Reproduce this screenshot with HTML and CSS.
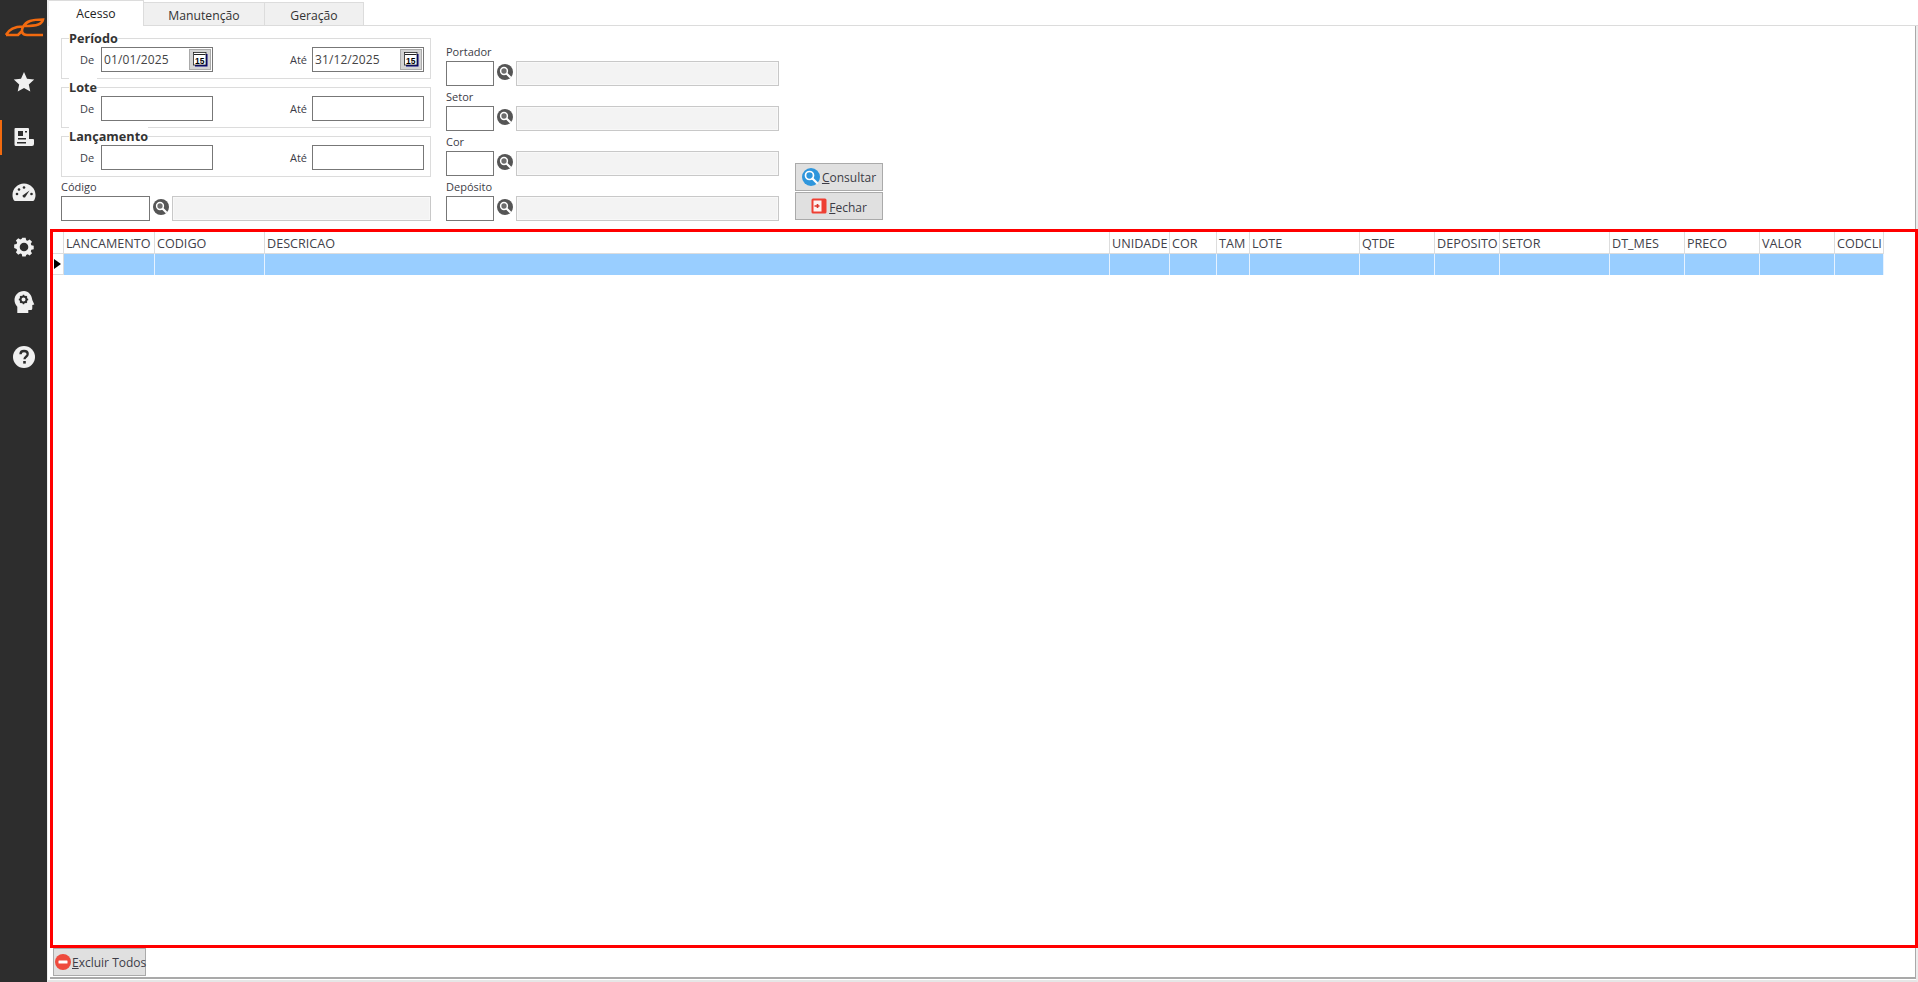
FILE: index.html
```html
<!DOCTYPE html>
<html lang="pt-BR">
<head>
<meta charset="utf-8">
<title>Acesso</title>
<link rel="stylesheet" href="styles.css">
</head>
<body>
<svg class="defs" width="0" height="0">
  <symbol id="lens" viewBox="0 0 16 16">
    <circle cx="8" cy="8" r="8" fill="#555"/>
    <path d="M9.500 9.500L13 13" stroke="#fff" stroke-width="2.200" stroke-linecap="round"/>
    <circle cx="7" cy="7" r="3.400" fill="#6e6e6e" stroke="#fff" stroke-width="1.500"/>
  </symbol>
</svg>
<div class="app">
  <nav class="sidebar">
    <div class="logo">
      <svg width="40" height="20" viewBox="5 17 40 20"><path d="M6 35C9 29 14 26.500 23 26.500M6 35H18L22 31M43 35H27C22 35 21 31 23 27C26 21 32 19.500 43 19.500C42 24 38 26 24 26" fill="none" stroke="#f26a0f" stroke-width="2.600"/></svg>
    </div>
    <a class="nav-item"><svg width="22" height="22" viewBox="0 0 22 22"><path d="M11 1l3 6.700 7.200.8-5.400 4.900 1.500 7.200-6.300-3.700-6.300 3.700 1.500-7.200L.800 8.500 8 7.700z" fill="#f0f0f0"/></svg></a>
    <a class="nav-item active"><svg width="20" height="20" viewBox="0 0 20 20"><path d="M1.500 1h12.500a1 1 0 0 1 1 1v10H19a1 1 0 0 1 1 1v4a2 2 0 0 1-2 2H2a1.500 1.500 0 0 1-1.500-1.500V2a1 1 0 0 1 1-1z" fill="#f0f0f0"/><path d="M4 4h5v5H4zM4 11h8v1.500H4zM11 4h2v1.500h-2z" fill="#2d2d2d"/><path d="M3 15h9v1.500H3z" fill="#2d2d2d"/></svg></a>
    <a class="nav-item"><svg width="24" height="20" viewBox="0 0 24 20"><path d="M12 1.500C5.600 1.500.500 6.700.500 13c0 2 .5 3.800 1.300 5.200l1 .8h18.400l1-.8c.8-1.400 1.300-3.200 1.300-5.200C23.500 6.700 18.400 1.500 12 1.500z" fill="#f0f0f0"/><path d="M10.500 13.500l7-5-4.500 7a2 2 0 0 1-2.500-2z" fill="#2d2d2d"/><circle cx="5" cy="12" r="1.300" fill="#2d2d2d"/><circle cx="7" cy="7.500" r="1.300" fill="#2d2d2d"/><circle cx="12" cy="5.500" r="1.300" fill="#2d2d2d"/><circle cx="19.500" cy="12" r="1.300" fill="#2d2d2d"/></svg></a>
    <a class="nav-item"><svg width="22" height="22" viewBox="0 0 22 22"><path d="M9 1h4l.6 2.800 1.700.7 2.400-1.500 2.800 2.800-1.500 2.400.7 1.700 2.800.6v4l-2.800.6-.7 1.700 1.500 2.400-2.800 2.800-2.400-1.500-1.700.7L13 23H9l-.6-2.800-1.700-.7-2.400 1.500-2.800-2.800 1.500-2.400-.7-1.700L-.500 13V9l2.800-.6.700-1.700L1.500 4.300 4.300 1.500l2.400 1.500 1.700-.7z" transform="translate(1.600 .9) scale(.85)" fill="#f0f0f0"/><circle cx="11" cy="11" r="4.300" fill="#2d2d2d"/></svg></a>
    <a class="nav-item"><svg width="22" height="24" viewBox="0 0 22 24"><path d="M11 1C5.500 1 1.500 5 1.500 10c0 3 1.200 5 2.800 6.700V23h11v-3h2.500a1.500 1.500 0 0 0 1.500-1.500V15l2-.6-2-4.400C18.800 5 15.500 1 11 1z" fill="#f0f0f0"/><circle cx="10.500" cy="9.500" r="3" fill="none" stroke="#2d2d2d" stroke-width="2"/><path d="M10.500 4.800v1.500M10.500 12.700v1.500M5.800 9.500h1.500M13.700 9.500h1.500M7.200 6.200l1 1M12.800 11.800l1 1M13.800 6.200l-1 1M8.200 11.800l-1 1" stroke="#2d2d2d" stroke-width="1.400"/></svg></a>
    <a class="nav-item"><svg width="22" height="22" viewBox="0 0 22 22"><circle cx="11" cy="11" r="11" fill="#f0f0f0"/><path d="M7.500 8.300C7.500 6 9 5 11 5c2.200 0 3.700 1.200 3.700 3 0 2.800-3.200 2.700-3.200 5.300" fill="none" stroke="#2d2d2d" stroke-width="2.300"/><rect x="10.200" y="15" width="2.600" height="2.600" fill="#2d2d2d"/></svg></a>
  </nav>

  <main class="main">
    <div class="tabs">
      <div class="tab active">Acesso</div>
      <div class="tab tab-wide">Manutenção</div>
      <div class="tab tab-mid">Geração</div>
    </div>
    <div class="page">
      <div class="sheet">
        <section class="filters">
          <div class="col-left">
            <div class="group">
              <span class="legend">Período</span>
              <div class="range">
                <label class="lbl-de">De</label>
                <div class="input date"><span>01/01/2025</span><button class="cal-btn"><svg width="15" height="15" viewBox="0 0 15 15"><rect x="2" y="2" width="12.500" height="12.500" fill="#000080"/><rect x=".5" y=".5" width="12.500" height="12.500" fill="#fff" stroke="#222" stroke-width=".8"/><path d="M1 2.500h11.500" stroke="#222"/><text x="2" y="11.500" class="cal-num">15</text></svg></button></div>
                <label class="lbl-ate">Até</label>
                <div class="input date"><span>31/12/2025</span><button class="cal-btn"><svg width="15" height="15" viewBox="0 0 15 15"><rect x="2" y="2" width="12.500" height="12.500" fill="#000080"/><rect x=".5" y=".5" width="12.500" height="12.500" fill="#fff" stroke="#222" stroke-width=".8"/><path d="M1 2.500h11.500" stroke="#222"/><text x="2" y="11.500" class="cal-num">15</text></svg></button></div>
              </div>
            </div>
            <div class="group">
              <span class="legend">Lote</span>
              <div class="range">
                <label class="lbl-de">De</label><div class="input date"></div>
                <label class="lbl-ate">Até</label><div class="input date"></div>
              </div>
            </div>
            <div class="group group-last">
              <span class="legend">Lançamento</span>
              <div class="range">
                <label class="lbl-de">De</label><div class="input date"></div>
                <label class="lbl-ate">Até</label><div class="input date"></div>
              </div>
            </div>
            <div class="lookup lookup-code">
              <label>Código</label>
              <div class="lookup-row">
                <div class="input code-wide"></div>
                <svg class="lens" width="16" height="16"><use href="#lens"/></svg>
                <div class="disabled"></div>
              </div>
            </div>
          </div>
          <div class="col-right">
            <div class="lookup"><label>Portador</label><div class="lookup-row"><div class="input code"></div><svg class="lens" width="16" height="16"><use href="#lens"/></svg><div class="disabled"></div></div></div>
            <div class="lookup"><label>Setor</label><div class="lookup-row"><div class="input code"></div><svg class="lens" width="16" height="16"><use href="#lens"/></svg><div class="disabled"></div></div></div>
            <div class="lookup"><label>Cor</label><div class="lookup-row"><div class="input code"></div><svg class="lens" width="16" height="16"><use href="#lens"/></svg><div class="disabled"></div></div></div>
            <div class="lookup"><label>Depósito</label><div class="lookup-row"><div class="input code"></div><svg class="lens" width="16" height="16"><use href="#lens"/></svg><div class="disabled"></div></div></div>
          </div>
          <div class="col-actions">
            <button class="btn">
              <svg width="18" height="18" viewBox="0 0 18 18"><circle cx="9" cy="9" r="9" fill="#2f96dc"/><circle cx="7.500" cy="7.500" r="4" fill="#2f96dc" stroke="#fff" stroke-width="1.700"/><path d="M10.500 10.500L15 15" stroke="#fff" stroke-width="2.200" stroke-linecap="round"/></svg>
              <span><u>C</u>onsultar</span>
            </button>
            <button class="btn btn-close">
              <svg width="16" height="16" viewBox="0 0 16 16"><rect x=".5" y=".5" width="15" height="15" rx="1.500" fill="#ee3f33"/><rect x="2.500" y="2.500" width="8" height="11" fill="#fdf2f1"/><path d="M3.500 8h5M6.500 6v4" stroke="#d9342a" stroke-width="1.600"/></svg>
              <span><u>F</u>echar</span>
            </button>
          </div>
        </section>

        <section class="grid-frame">
          <div class="data-grid">
            <div class="ind"></div>
            <div class="th">LANCAMENTO</div><div class="th">CODIGO</div><div class="th">DESCRICAO</div><div class="th">UNIDADE</div><div class="th">COR</div><div class="th">TAM</div><div class="th">LOTE</div><div class="th">QTDE</div><div class="th">DEPOSITO</div><div class="th">SETOR</div><div class="th">DT_MES</div><div class="th">PRECO</div><div class="th">VALOR</div><div class="th">CODCLI</div>
            <div class="ind ind-row"><span class="arrow"></span></div>
            <div class="td"></div><div class="td"></div><div class="td"></div><div class="td"></div><div class="td"></div><div class="td"></div><div class="td"></div><div class="td"></div><div class="td"></div><div class="td"></div><div class="td"></div><div class="td"></div><div class="td"></div><div class="td"></div>
          </div>
        </section>

        <div class="footer">
          <button class="btn btn-del">
            <svg width="16" height="16" viewBox="0 0 16 16"><circle cx="8" cy="8" r="8" fill="#ee4b3e"/><rect x="3.500" y="6.500" width="9" height="3" rx=".5" fill="#fff"/></svg>
            <span><u>E</u>xcluir Todos</span>
          </button>
        </div>
      </div>
    </div>
  </main>
</div>
</body>
</html>
```
FILE: styles.css
```css
* { box-sizing: border-box; }
html, body { margin: 0; height: 982px; overflow: hidden; background: #fff; }
body { font-family: "Open Sans", "Noto Sans", sans-serif; font-size: 11px; color: #3c3c46; }
.defs { position: absolute; }
.cal-num { font: 700 8.500px "Liberation Sans", sans-serif; fill: #000; }

.app { display: flex; height: 982px; }
.sidebar { width: 47px; flex: none; background: #2d2d2d; display: flex; flex-direction: column; }
.logo { height: 54px; padding: 17px 0 0 5px; }
.logo svg { display: block; }
.nav-item { height: 55px; display: flex; align-items: center; justify-content: center; }
.nav-item.active { background: linear-gradient(#f26a0f, #f26a0f) 0 11px / 2px 35px no-repeat; }

.main { flex: 1; min-width: 0; display: flex; flex-direction: column; border-left: 1px solid #ececec; }
.tabs { height: 26px; flex: none; display: flex; align-items: flex-end; border-bottom: 1px solid #dcdcdc; }
.tab { height: 23px; width: 121px; background: #f0f0f0; border: 1px solid #dcdcdc; border-bottom: 0; border-left: 0; text-align: center; font-size: 12.200px; line-height: 25px; color: #333; }
.tab.active { height: 26px; width: 96px; background: #fff; line-height: 25px; margin-bottom: -1px; border-left: 1px solid #eee; color: #222; }
.tab-mid { width: 99px; }

.page { flex: 1; min-height: 0; padding: 0 0 1px 2px; border-right: 2px solid #ececec; border-bottom: 2px solid #e6e6e6; display: flex; }
.sheet { flex: 1; display: flex; flex-direction: column; border-right: 1px solid #a9a9a9; border-bottom: 2px solid #a9a9a9; }

.filters { height: 203px; flex: none; padding: 12px 0 0 11px; display: flex; }
.col-left { width: 370px; flex: none; }
.col-right { width: 334px; flex: none; margin-left: 15px; padding-top: 3px; }
.col-actions { margin-left: 15px; padding-top: 125px; display: flex; flex-direction: column; gap: 1px; }

.group { position: relative; height: 41px; margin-bottom: 8px; border: 1px solid #dcdcdc; padding: 8px 0 0 0; }
.group-last { margin-bottom: 0; }
.legend { position: absolute; top: -10px; left: 7px; font-size: 12.700px; font-weight: 700; line-height: 18px; color: #333; background: #fff; }
.range { display: flex; align-items: center; height: 25px; }
.lbl-de { width: 39px; padding-left: 18px; flex: none; }
.lbl-ate { width: 99px; flex: none; text-align: right; padding-right: 5px; }

.input { height: 25px; border: 1px solid #777; background: #fff; }
.date { width: 112px; flex: none; display: flex; align-items: center; font-size: 12px; padding-left: 2px; color: #444; }
.date span { flex: 1; letter-spacing: .1px; }
.cal-btn { width: 22px; height: 21px; margin-right: 1px; padding: 0; border: 1px solid #aaa; background: #d4d4d4; display: flex; align-items: center; justify-content: center; }
.cal-btn svg { display: block; }

.lookup { height: 45px; }
.lookup label { display: block; height: 20px; line-height: 21px; }
.lookup-row { display: flex; align-items: flex-start; height: 25px; }
.lookup-code { height: 44px; }
.lookup-code label { height: 19px; line-height: 20px; }
.code { width: 48px; flex: none; }
.code-wide { width: 89px; flex: none; }
.lens { margin: 3px 3px 0 3px; flex: none; }
.disabled { flex: 1; height: 25px; border: 1px solid #c8c8c8; background: #f3f3f3; box-shadow: inset 0 0 0 1px #f8f8f8; }
.col-right .disabled { flex: none; width: 263px; }

.btn { height: 28px; width: 88px; padding: 0; border: 1px solid #aaa; background: #e0e0e0; display: flex; align-items: center; justify-content: center; gap: 2px; font: 12px/20px "Open Sans", "Noto Sans", sans-serif; color: #3c3c46; }
.btn span { padding-top: 1px; }
.btn-close span { padding-top: 3px; }
.btn svg { flex: none; }

.grid-frame { height: 719px; flex: none; border: 3px solid #f00; margin-right: -3px; }
.data-grid { display: grid; grid-template-columns: 11px 91px 110px 845px 60px 47px 33px 110px 75px 65px 110px 75px 75px 75px 49px; grid-template-rows: 22px 21px; width: max-content; }
.ind { background: #fff; border-right: 1px solid #ddd; border-bottom: 1px solid #ddd; }
.ind-row { display: flex; align-items: center; justify-content: flex-end; padding-right: 2px; }
.arrow { width: 0; height: 0; border-left: 7px solid #000; border-top: 5px solid transparent; border-bottom: 5px solid transparent; }
.th { padding-left: 2px; font-size: 12.600px; line-height: 23px; border-right: 1px solid #ddd; border-bottom: 1px solid #ddd; white-space: nowrap; overflow: hidden; color: #414149; }
.td { background: #99ceff; border-right: 1px solid #e6f2ff; }

.footer { height: 28px; flex: none; padding-left: 3px; }
.btn-del { width: 93px; height: 28px; justify-content: flex-start; gap: 1px; padding-left: 1px; white-space: nowrap; }
.btn-del span { flex: none; font-size: 12px; }
```
